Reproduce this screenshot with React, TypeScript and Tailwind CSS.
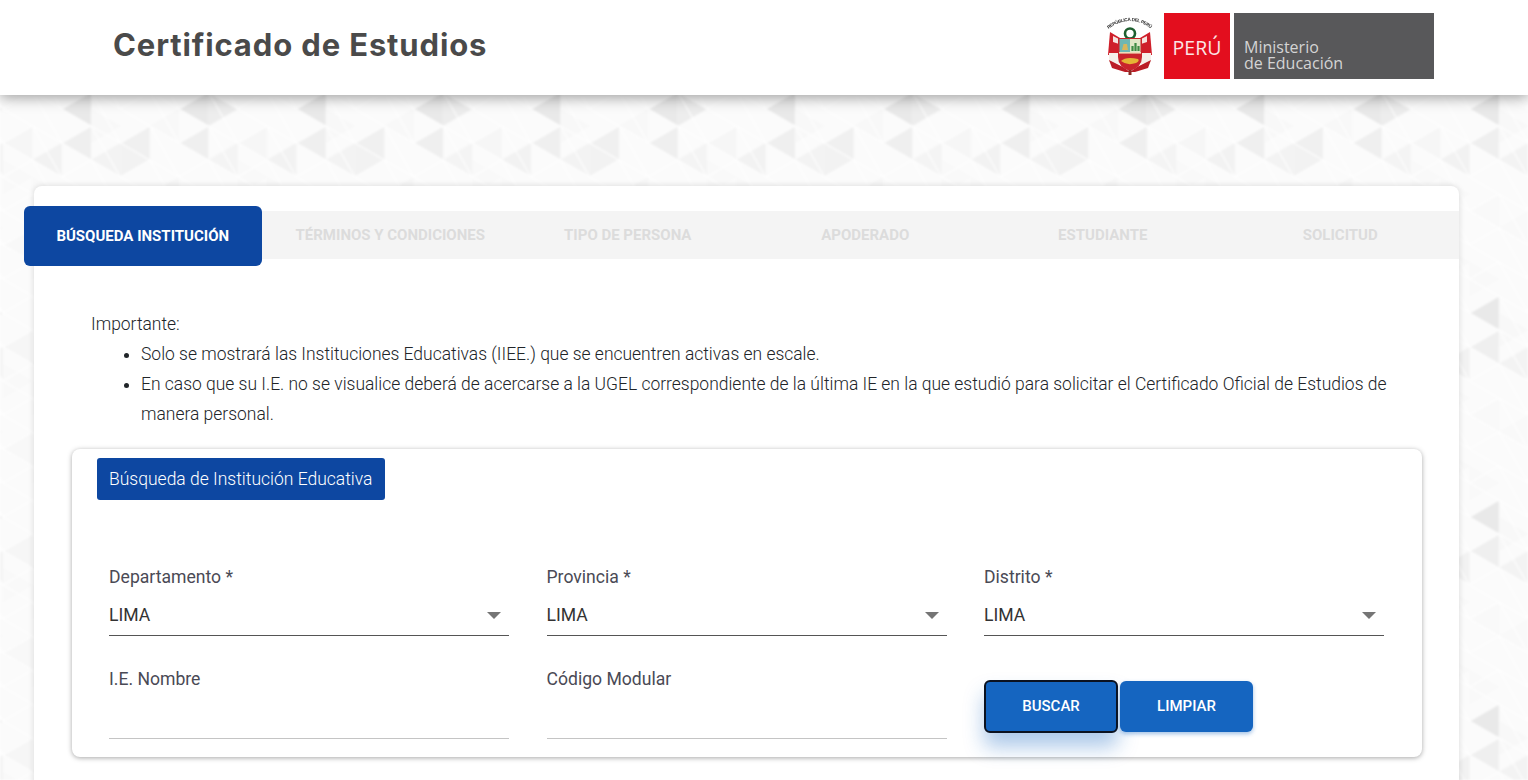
import React from "react";

const W = 29.33;
const S = 34;
const TILE_W = W * 8;
const TILE_H = S * 6;

type Tri = [number, number, "L" | "R", string];

const tris: Tri[] = [
  [2, 17, "L", "#e9e9e9"],
  [6, 17, "L", "#e9e9e9"],
  [7, 17, "R", "#ededed"],
  [2, 51, "L", "#efefef"],
  [4, 51, "L", "#f0f0f0"],
  [6, 51, "L", "#efefef"],
  [0, 51, "L", "#f6f6f6"],
  [1, 68, "L", "#f2f2f2"],
  [3, 68, "L", "#f3f3f3"],
  [4, 68, "R", "#f2f2f2"],
  [7, 68, "L", "#f4f4f4"],
  [0, 85, "R", "#f9f9f9"],
  [3, 34, "R", "#f8f8f8"],
  [5, 34, "L", "#f8f8f8"],
  [1, 102, "R", "#f9f9f9"],
  [5, 102, "L", "#f7f7f7"],
  [2, 119, "L", "#f9f9f9"],
  [6, 119, "R", "#f8f8f8"],
  [3, 136, "L", "#f9f9f9"],
  [7, 136, "R", "#f9f9f9"],
  [0, 153, "L", "#f8f8f8"],
  [4, 153, "L", "#f9f9f9"],
  [1, 170, "R", "#f9f9f9"],
  [5, 170, "L", "#f9f9f9"],
  [6, 187, "L", "#f9f9f9"],
  [2, 187, "R", "#f9f9f9"],
];

function triPoints(k: number, y: number, dir: "L" | "R") {
  const a = k * W;
  const b = (k + 1) * W;
  return dir === "L"
    ? `${a},${y} ${b},${y - S / 2} ${b},${y + S / 2}`
    : `${a},${y - S / 2} ${a},${y + S / 2} ${b},${y}`;
}

function PatternBackdrop() {
  const lines: string[] = [];
  for (let k = 0; k < 8; k++) {
    for (let n = -1; n < 7; n++) {
      const oa = k % 2 === 0 ? S / 2 : 0;
      const ob = k % 2 === 0 ? 0 : S / 2;
      const x1 = k * W;
      const x2 = (k + 1) * W;
      lines.push(`M${x1} ${oa + n * S}L${x2} ${ob + n * S}`);
      lines.push(`M${x1} ${oa + n * S}L${x2} ${ob + n * S + S}`);
    }
  }
  return (
    <svg className="absolute inset-0 h-[780px] w-[1528px] blur-[1px]" aria-hidden="true">
      <defs>
        <pattern id="tri" x="3" y="92" width={TILE_W} height={TILE_H} patternUnits="userSpaceOnUse">
          <rect width={TILE_W} height={TILE_H} fill="#fbfbfb" />
          {tris.map(([k, y, d, c], i) => (
            <polygon key={i} points={triPoints(k, y, d)} fill={c} />
          ))}
          <path d={lines.join("")} stroke="#ffffff" strokeWidth="1.2" fill="none" opacity="0.9" />
        </pattern>
      </defs>
      <rect width="1528" height="780" fill="url(#tri)" />
    </svg>
  );
}

function Emblem() {
  return (
    <svg viewBox="0 0 50 58" className="h-[58px] w-[50px] blur-[0.45px]" aria-hidden="true">
      <defs>
        <path id="arc" d="M1 14 Q25 -6 49 14" />
      </defs>
      <text fontSize="4.6" fontWeight="700" fill="#2b2b2b" fontFamily="'Liberation Sans', sans-serif" textLength="46">
        <textPath href="#arc" startOffset="3">REPÚBLICA DEL PERÚ</textPath>
      </text>
      <circle cx="25" cy="16.5" r="5" fill="#ffffff" stroke="#1f5f30" strokeWidth="2.6" />
      <path d="M5 15 L15 21 L15 38 L3 38 Z" fill="#cf1f2a" />
      <path d="M45 15 L35 21 L35 38 L47 38 Z" fill="#cf1f2a" />
      <path d="M8 19 L14 22 L14 27 L8 25 Z" fill="#f6e4df" />
      <path d="M42 19 L36 22 L36 27 L42 25 Z" fill="#f6e4df" />
      <path d="M4 36 L14 36 L14 47 L4 45 Z" fill="#f5efe9" />
      <path d="M46 36 L36 36 L36 47 L46 45 Z" fill="#f5efe9" />
      <path d="M4 43 L18 50 L25 55 L32 50 L46 43 L43 51 L30 55 L20 55 L7 51 Z" fill="#bb1c26" />
      <path d="M13 21 H37 V40 Q37 50 25 54 Q13 50 13 40 Z" fill="#c9242c" />
      <rect x="14.5" y="22" width="10.5" height="13" fill="#6fb7b2" />
      <rect x="25" y="22" width="10.5" height="13" fill="#dfe8c8" />
      <path d="M27.5 34 V29 M30.5 34 V26 M33.5 34 V29" stroke="#3d8b45" strokeWidth="2.2" />
      <path d="M17 33 L18.5 27 L22 27 L23 33 Z" fill="#d9b65a" />
      <rect x="14" y="35" width="22" height="1.6" fill="#f0dcb8" />
      <path d="M16 44 Q21 39 33 42 Q35 44 31 46 Q22 49 16 44 Z" fill="#e5b435" />
      <path d="M23.5 53 H26.5 V58 H23.5 Z" fill="#8b2b24" />
    </svg>
  );
}

function Arrow() {
  return (
    <svg width="14" height="8" viewBox="0 0 14 8" aria-hidden="true" className="shrink-0">
      <polygon points="0,0 14,0 7,7" fill="#757575" />
    </svg>
  );
}

function SelectField({ label, value }: { label: string; value: string }) {
  return (
    <div className="flex flex-col">
      <div className="h-[24px] text-[17.6px] leading-[24px] text-[#4a4a55]">{label}</div>
      <div className="mt-[14px] flex h-[33px] items-start justify-between border-b border-[#555555] pr-[8px]">
        <span className="text-[17.6px] leading-[24px] text-[#333333]">{value}</span>
        <span className="mt-[9px]">
          <Arrow />
        </span>
      </div>
    </div>
  );
}

function TextField({ label }: { label: string }) {
  return (
    <div className="flex flex-col">
      <div className="h-[24px] text-[17.6px] leading-[24px] text-[#4a4a55]">{label}</div>
      <div className="mt-[47px] h-[1px] bg-[#c4c4c4]" />
    </div>
  );
}

const tabs = ["TÉRMINOS Y CONDICIONES", "TIPO DE PERSONA", "APODERADO", "ESTUDIANTE", "SOLICITUD"];

export default function App() {
  return (
    <div className="relative h-[780px] w-[1528px] overflow-hidden font-['Roboto',sans-serif]">
      <PatternBackdrop />

      <header className="relative z-10 flex h-[95px] items-center justify-between bg-white pb-[4px] pl-[113px] pr-[94px] shadow-[0_2px_14px_rgba(0,0,0,0.4)]">
        <h1 className="font-['Inter',sans-serif] text-[31px] font-bold tracking-[0.028em] text-[#4a4a4a]">
          Certificado de Estudios
        </h1>
        <div className="flex items-center">
          <Emblem />
          <div className="ml-[9px] flex h-[66px] w-[66px] items-center justify-center bg-[#e30e1e] pt-[4px] font-['Open_Sans',sans-serif] text-[19.5px] text-[#fbe4e4]">
            PERÚ
          </div>
          <div className="ml-[4px] flex h-[66px] w-[200px] items-center bg-[#58585a] pl-[10px] pt-[18px] font-['Open_Sans',sans-serif] text-[16px] leading-[16px] text-[#d4d4d4]">
            <div>
              Ministerio
              <br />
              de Educación
            </div>
          </div>
        </div>
      </header>

      <main className="relative ml-[34px] mt-[91px] h-[700px] w-[1425px] rounded-t-lg bg-white pt-[25px] shadow-[0_0_6px_rgba(0,0,0,0.14)]">
        <div className="flex h-[48px] bg-[#f4f4f4]">
          <div className="relative -ml-[10px] mr-[10px] -mt-[5px] flex h-[60px] w-[237.5px] shrink-0 items-center justify-center rounded-md bg-[#0d47a1] text-[15px] font-bold text-white">
            BÚSQUEDA INSTITUCIÓN
          </div>
          {tabs.map((t) => (
            <div
              key={t}
              className="flex w-[237.5px] items-center justify-center text-[15px] font-bold text-[#dcdcdc]"
            >
              {t}
            </div>
          ))}
        </div>

        <div className="pl-[57px] pr-[60px] pt-[50px] text-[17.47px] font-light leading-[30px] text-[#212529]">
          <p>Importante:</p>
          <ul className="list-disc pl-[50px]">
            <li>Solo se mostrará las Instituciones Educativas (IIEE.) que se encuentren activas en escale.</li>
            <li>
              En caso que su I.E. no se visualice deberá de acercarse a la UGEL correspondiente de la última IE en la
              que estudió para solicitar el Certificado Oficial de Estudios de manera personal.
            </li>
          </ul>
        </div>

        <section className="ml-[38px] mt-[20px] h-[308px] w-[1350px] rounded-lg bg-white pl-[37px] pr-[38px] pt-[9px] shadow-[0_1px_5px_rgba(0,0,0,0.35)]">
          <div className="-ml-[12px] flex h-[42px] w-[288px] items-center rounded-[3px] bg-[#0d47a1] pl-[12px] text-[17.5px] font-light text-white">
            Búsqueda de Institución Educativa
          </div>
          <div className="mt-[65px] grid grid-cols-3 gap-x-[37.5px] gap-y-[31px]">
            <SelectField label="Departamento *" value="LIMA" />
            <SelectField label="Provincia *" value="LIMA" />
            <SelectField label="Distrito *" value="LIMA" />
            <TextField label="I.E. Nombre" />
            <TextField label="Código Modular" />
            <div className="flex items-start gap-[2px] pt-[13px]">
              <button className="flex h-[53px] w-[134px] items-center justify-center rounded-md border-2 border-[#0b1220] bg-[#1565c0] text-[15px] font-medium text-white shadow-[0_14px_20px_rgba(21,101,192,0.35)]">
                BUSCAR
              </button>
              <button className="mt-[1px] flex h-[51px] w-[133px] items-center justify-center rounded-md bg-[#1565c0] text-[15px] font-medium text-white shadow-[0_2px_4px_rgba(21,101,192,0.4)]">
                LIMPIAR
              </button>
            </div>
          </div>
        </section>
      </main>
    </div>
  );
}
